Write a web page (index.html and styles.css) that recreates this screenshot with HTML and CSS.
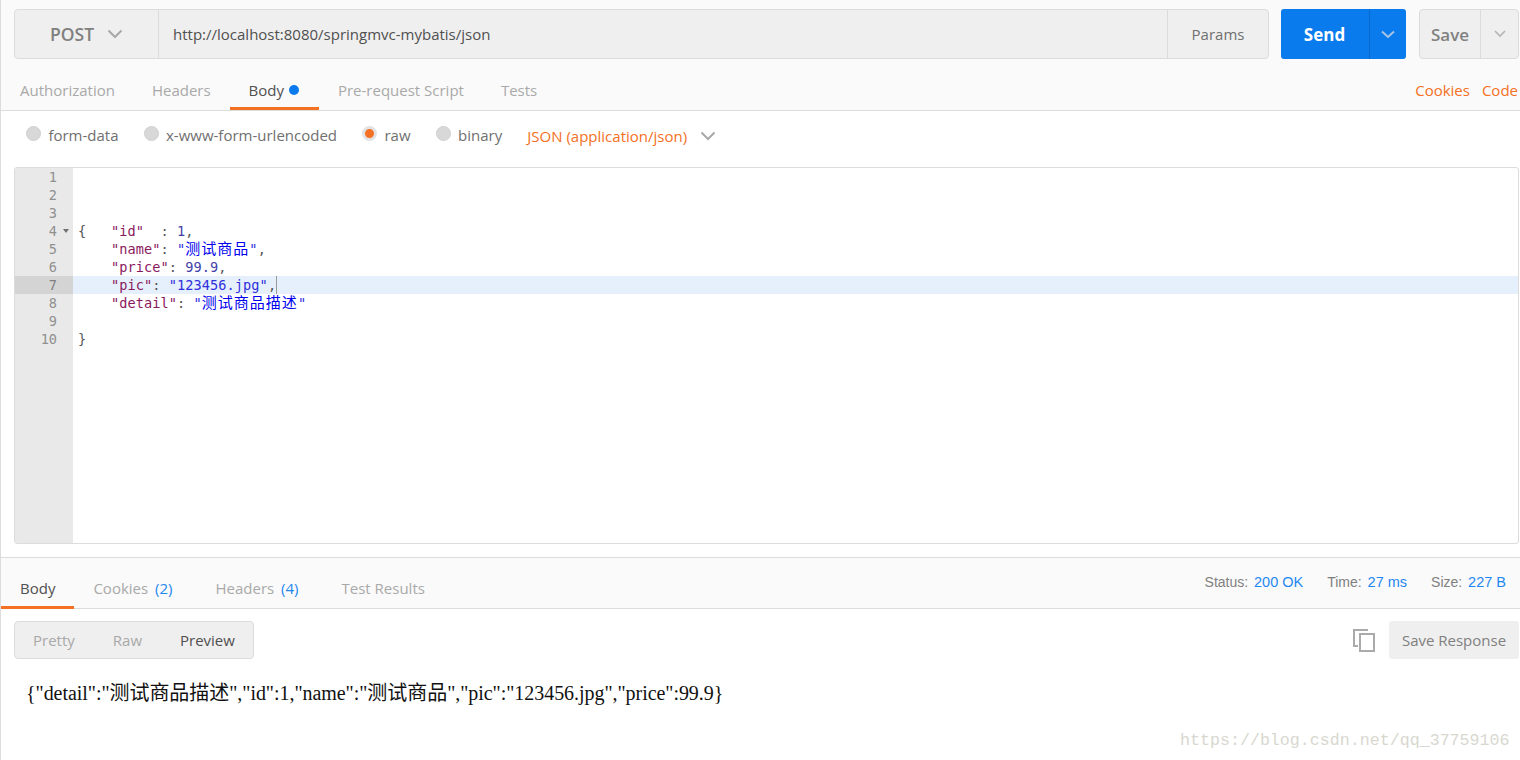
FILE: index.html
```html
<!DOCTYPE html>
<html lang="en">
<head>
<meta charset="utf-8">
<title>Postman</title>
<link rel="stylesheet" href="styles.css">
</head>
<body>
<div class="app">
  <section class="request">
    <div class="url-row">
      <div class="url-group">
        <div class="method"><span>POST</span>
          <svg class="chev" width="16" height="10" viewBox="0 0 16 10"><path d="M1.500 1.500 8 8l6.500-6.500" fill="none" stroke="#a8a8a8" stroke-width="2"/></svg>
        </div>
        <div class="url">http://localhost:8080/springmvc-mybatis/json</div>
        <div class="params">Params</div>
      </div>
      <div class="send">
        <span class="send-label">Send</span>
        <span class="send-drop"><svg width="14" height="9" viewBox="0 0 14 9"><path d="M1 1.500 7 7l6-5.500" fill="none" stroke="#a9c4e4" stroke-width="2"/></svg></span>
      </div>
      <div class="save">
        <span class="save-label">Save</span>
        <span class="save-drop"><svg width="12" height="8" viewBox="0 0 12 8"><path d="M1 1 6 6l5-5" fill="none" stroke="#b4b4b4" stroke-width="1.600"/></svg></span>
      </div>
    </div>
    <nav class="tabs">
      <span class="tab first">Authorization</span>
      <span class="tab">Headers</span>
      <span class="tab active">Body <i class="dot"></i></span>
      <span class="tab script">Pre-request Script</span>
      <span class="tab">Tests</span>
      <span class="tab-links"><span>Cookies</span><span>Code</span></span>
    </nav>
  </section>
  <section class="body-pane">
    <div class="options">
      <label class="opt"><i class="radio"></i>form-data</label>
      <label class="opt"><i class="radio"></i>x-www-form-urlencoded</label>
      <label class="opt"><i class="radio on"></i>raw</label>
      <label class="opt"><i class="radio"></i>binary</label>
      <span class="type">JSON (application/json)
        <svg width="16" height="10" viewBox="0 0 16 10"><path d="M1.500 1.500 8 8l6.500-6.500" fill="none" stroke="#a8a8a8" stroke-width="2"/></svg>
      </span>
    </div>
    <div class="editor">
      <div class="gutter">
        <div class="ln">1</div><div class="ln">2</div><div class="ln">3</div>
        <div class="ln fold">4</div>
        <div class="ln">5</div><div class="ln">6</div>
        <div class="ln cur">7</div>
        <div class="ln">8</div><div class="ln">9</div><div class="ln">10</div>
      </div>
      <div class="code">
        <div class="cl"></div><div class="cl"></div><div class="cl"></div>
        <div class="cl">{   <b class="k">"id"</b>  : <b class="n">1</b>,</div>
        <div class="cl">    <b class="k">"name"</b>: <b class="s">"<span class="cjk">测试商品</span>"</b>,</div>
        <div class="cl">    <b class="k">"price"</b>: <b class="n">99.9</b>,</div>
        <div class="cl curline">    <b class="k">"pic"</b>: <b class="s">"123456.jpg"</b>,<i class="caret"></i></div>
        <div class="cl">    <b class="k">"detail"</b>: <b class="s">"<span class="cjk">测试商品描述</span>"</b></div>
        <div class="cl"></div>
        <div class="cl">}</div>
      </div>
    </div>
  </section>
  <section class="response">
    <div class="res-head">
      <nav class="res-tabs">
        <span class="rtab active">Body</span>
        <span class="rtab cookies">Cookies <em>(2)</em></span>
        <span class="rtab">Headers <em>(4)</em></span>
        <span class="rtab">Test Results</span>
      </nav>
      <div class="stats">
        <span>Status: <em>200 OK</em></span>
        <span>Time: <em>27 ms</em></span>
        <span>Size: <em>227 B</em></span>
      </div>
    </div>
    <div class="res-tools">
      <div class="views"><span>Pretty</span><span>Raw</span><span class="sel">Preview</span></div>
      <div class="res-actions">
        <svg width="22" height="23" viewBox="0 0 22 23"><path d="M15 1H1v16h4" fill="none" stroke="#aaa" stroke-width="2"/><path d="M7 5h14v17H7z" fill="none" stroke="#aaa" stroke-width="2"/></svg>
        <span class="save-res">Save Response</span>
      </div>
    </div>
    <div class="preview">{"detail":"测试商品描述","id":1,"name":"测试商品","pic":"123456.jpg","price":99.9}</div>
  </section>
</div>
<div class="watermark">https://blog.csdn.net/qq_37759106</div>
</body>
</html>
```
FILE: styles.css
```css
* { box-sizing: border-box; }
html, body { margin: 0; height: 760px; overflow: hidden; background: #fff; }
body { font-family: "Open Sans", "Noto Sans CJK SC", sans-serif; font-size: 15px; position: relative; }
.app { height: 760px; border-left: 1px solid #dcdcdc; display: flex; flex-direction: column; }

.request { background: #fafafa; height: 111px; border-bottom: 1px solid #dcdcdc; padding-top: 9px; display: flex; flex-direction: column; }
.url-row { display: flex; height: 50px; padding-left: 13px; }
.url-group { display: flex; width: 1255px; background: #efefef; border: 1px solid #dcdcdc; border-radius: 4px; }
.method { width: 144px; border-right: 1px solid #dcdcdc; display: flex; align-items: center; padding-left: 35px; gap: 13px; font-weight: 600; font-size: 17.500px; color: #808080; }
.url { flex: 1; display: flex; align-items: center; padding-left: 14px; color: #505050; }
.params { width: 101px; border-left: 1px solid #dcdcdc; display: flex; align-items: center; justify-content: center; color: #707070; }
.send { margin-left: 12px; width: 125px; background: #097bed; border-radius: 3px; display: flex; color: #fff; }
.send-label { flex: 1; display: flex; align-items: center; justify-content: center; font-weight: 700; font-size: 17px; padding-right: 1px; }
.send-drop { width: 37px; border-left: 1px solid #0a6ac9; display: flex; align-items: center; justify-content: center; }
.save { margin-left: 13px; width: 100px; background: #efefef; border: 1px solid #dcdcdc; border-radius: 4px; display: flex; }
.save-label { flex: 1; display: flex; align-items: center; justify-content: center; font-weight: 600; font-size: 17px; color: #808080; }
.save-drop { width: 38px; border-left: 1px solid #dcdcdc; display: flex; align-items: center; justify-content: center; }

.tabs { display: flex; height: 51px; align-items: stretch; }
.tab { display: flex; align-items: center; padding: 14px 19px 0; color: #a9a9a9; border-bottom: 3px solid transparent; white-space: pre; }
.tab.first { padding-right: 18px; }
.tab.script { padding-right: 18px; }
.tab.active { color: #505050; border-bottom-color: #f47023; padding-right: 20px; }
.dot { width: 10px; height: 10px; border-radius: 50%; background: #097bed; margin-left: 1px; margin-top: -1px; }
.tab-links { margin-left: auto; display: flex; align-items: center; gap: 12px; padding-top: 14px; padding-bottom: 3px; color: #f47023; margin-right: 2px; }

.body-pane { padding-left: 13px; height: 446px; }
.options { display: flex; align-items: center; height: 56px; padding: 0 0 8px 12px; color: #707070; }
.opt { display: flex; align-items: center; gap: 7.400px; margin-right: 25.100px; }
.radio { width: 15px; height: 15px; border-radius: 50%; background: #d8d8d8; border: 1px solid #d0d0d0; margin-top: -4px; }
.radio.on { background: #f47023; border: 3px solid #e2e2e2; }
.type { color: #f47023; display: flex; align-items: center; gap: 13px; margin-top: 1px; }
.editor { height: 377px; border: 1px solid #dcdcdc; border-radius: 3px; display: flex; background: #fff; overflow: hidden; margin-right: 1px; }
.gutter { width: 58px; background: #e9e9e9; flex: none; }
.ln, .cl { height: 18px; line-height: 18px; font-family: "DejaVu Sans Mono", monospace; font-size: 13.600px; }
.ln { text-align: right; padding-right: 16px; color: #909090; position: relative; }
.ln.cur { background: #d4d4d4; color: #808080; }
.ln.fold::after { content: ""; position: absolute; right: 4px; top: 7px; border: 3.500px solid transparent; border-top: 4px solid #707070; border-bottom: 0; }
.code { flex: 1; }
.cl { white-space: pre; padding-left: 5px; color: #555; letter-spacing: 0.070px; }
.curline { background: #e6f0fc; }
.k { font-weight: 400; color: #8a1a5e; }
.s { font-weight: 400; color: #2f2fdc; }
.n { font-weight: 400; color: #3f3fa8; }
.cjk { font-family: "Noto Sans CJK SC", sans-serif; font-size: 15px; line-height: 1; letter-spacing: 1px; color: #0000ee; }
.caret { display: inline-block; width: 1px; height: 18px; background: #999; vertical-align: top; }

.response { flex: 1; border-top: 1px solid #dcdcdc; }
.res-head { height: 51px; background: #fafafa; border-bottom: 1px solid #dcdcdc; display: flex; justify-content: space-between; }
.res-tabs { display: flex; }
.rtab { display: flex; align-items: center; gap: 3px; padding: 11px 21.500px 0; color: #a9a9a9; border-bottom: 3px solid transparent; white-space: pre; height: 51px; }
.rtab:first-child { padding: 11px 19px 0 19px; }
.rtab.cookies { padding-left: 19px; }
.rtab.active { color: #505050; border-bottom-color: #f47023; }
.rtab em { font-style: normal; color: #1f88f0; }
.stats { display: flex; gap: 24px; padding: 16px 14px 0 0; font-family: "Liberation Sans", sans-serif; font-size: 14px; color: #808080; }
.stats em { font-style: normal; font-size: 14.500px; color: #1f88f0; margin-left: 2px; }
.res-tools { display: flex; justify-content: space-between; align-items: center; padding: 12px 1px 0 13px; }
.views { display: flex; height: 38px; width: 240px; background: #efefef; border: 1px solid #dcdcdc; border-radius: 4px; align-items: center; padding-left: 18px; gap: 38px; color: #a9a9a9; }
.views .sel { color: #505050; }
.res-actions { display: flex; align-items: center; gap: 14px; }
.save-res { display: flex; align-items: center; justify-content: center; width: 130px; height: 38px; background: #efefef; border-radius: 3px; color: #808080; }
.preview { padding: 22px 0 0 25px; font-family: "Liberation Serif", "Noto Sans CJK SC", serif; font-size: 20px; letter-spacing: -0.050px; color: #111; line-height: 24px; }
.watermark { position: absolute; left: 1180px; top: 731px; font-family: "Liberation Mono", monospace; font-size: 16.650px; color: #d8d8d0; line-height: 20px; }
```
